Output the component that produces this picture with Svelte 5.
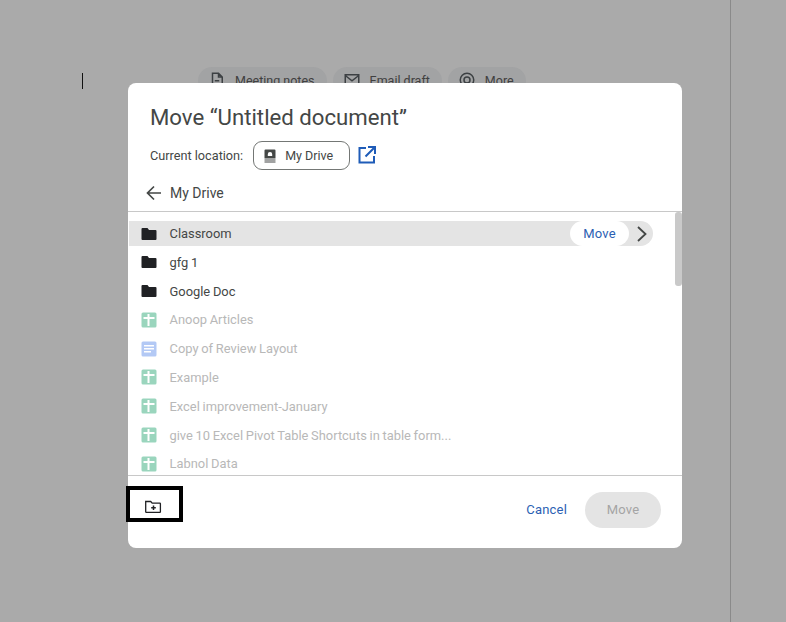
<script>
  const folders = ['Classroom', 'gfg 1', 'Google Doc'];
  const files = [
    { name: 'Anoop Articles', type: 'sheet' },
    { name: 'Copy of Review Layout', type: 'doc' },
    { name: 'Example', type: 'sheet' },
    { name: 'Excel improvement-January', type: 'sheet' },
    { name: 'give 10 Excel Pivot Table Shortcuts in table form...', type: 'sheet' },
    { name: 'Labnol Data', type: 'sheet' }
  ];
</script>

<div class="page">
  <div class="doc">
    <span class="caret"></span>
    <div class="chips">
      <div class="chip">
        <svg width="18" height="18" viewBox="0 0 24 24" fill="none" stroke="#3c4043" stroke-width="2"><path d="M6 3h8l5 5v13H6zM14 3v5h5M9 13h6M9 17h6"/></svg>
        <span>Meeting notes</span>
      </div>
      <div class="chip">
        <svg width="18" height="18" viewBox="0 0 24 24" fill="none" stroke="#3c4043" stroke-width="2"><path d="M3 5h18v14H3zM3 6l9 7 9-7"/></svg>
        <span>Email draft</span>
      </div>
      <div class="chip">
        <svg width="18" height="18" viewBox="0 0 24 24" fill="none" stroke="#3c4043" stroke-width="2"><circle cx="12" cy="12" r="9"/><circle cx="12" cy="12" r="4"/></svg>
        <span>More</span>
      </div>
    </div>
  </div>
  <div class="margin"></div>

  <div class="dialog">
    <h1>Move “Untitled document”</h1>
    <div class="location">
      <span class="loc-label">Current location:</span>
      <div class="loc-chip">
        <svg width="14" height="14" viewBox="0 0 14 14"><path fill="#444746" d="M2.5 0.5h9a1 1 0 0 1 1 1V9.5h-11V1.500a1 1 0 0 1 1-1zM1.500 10.500h11v1h-11zM1.500 12.500h11v1h-11z"/><path fill="#fff" d="M7 3a2.200 2.200 0 0 1 2.200 2.200V7H4.800V5.200A2.200 2.200 0 0 1 7 3z"/></svg>
        <span>My Drive</span>
      </div>
      <svg class="open" width="20" height="20" viewBox="0 0 20 20" fill="none" stroke="#1f5cb8" stroke-width="2"><path d="M9 3H2.500v14.500H17V11M11 2h7v7M18 2 8.500 11.500"/></svg>
    </div>
    <div class="crumb">
      <svg width="18" height="18" viewBox="0 0 18 18" fill="none" stroke="#444746" stroke-width="1.700"><path d="M16 9H2.500M9 2.500 2.500 9 9 15.500"/></svg>
      <span>My Drive</span>
    </div>

    <div class="list">
      {#each folders as name, i}
        <div class="row" class:selected={i === 0}>
          <svg class="icon" width="16" height="16" viewBox="0 0 16 16"><path fill="#202124" d="M1.500 2h5l1.500 2h6.500a1 1 0 0 1 1 1v8a1 1 0 0 1-1 1H1.500a1 1 0 0 1-1-1V3a1 1 0 0 1 1-1z"/></svg>
          <span class="name">{name}</span>
          {#if i === 0}
            <span class="row-move">Move</span>
            <svg class="chev" width="12" height="18" viewBox="0 0 12 18" fill="none" stroke="#444746" stroke-width="1.800"><path d="M2 2l7.500 7L2 16"/></svg>
          {/if}
        </div>
      {/each}
      {#each files as file}
        <div class="row disabled">
          {#if file.type === 'sheet'}
            <svg class="icon" width="16" height="16" viewBox="0 0 16 16"><rect width="15" height="15" x=".5" y=".5" rx="1.500" fill="#9ad5bd"/><path fill="#fff" d="M6.500 2h2v3h5v2h-5v7h-2V7h-4V5h4z"/></svg>
          {:else}
            <svg class="icon" width="16" height="16" viewBox="0 0 16 16"><rect width="15" height="15" x=".5" y=".5" rx="1.500" fill="#b3c9f5"/><path fill="#fff" d="M3 4h10v1.500H3zM3 7h10v1.500H3zM3 10h7v1.500H3z"/></svg>
          {/if}
          <span class="name">{file.name}</span>
        </div>
      {/each}
      <div class="scrollbar"></div>
    </div>

    <div class="footer">
      <svg class="new-folder" width="18" height="18" viewBox="0 0 18 18" fill="none" stroke="#202124" stroke-width="1.300"><path d="M1.700 3.500h5l1.500 1.700h7.600a.6.6 0 0 1 .6.600v8a.6.6 0 0 1-.6.6H2.300a.6.600 0 0 1-.6-.6z"/><path stroke-width="1.500" d="M9.500 7.500v4.500M7.200 9.700h4.600"/></svg>
      <div class="actions">
        <span class="cancel">Cancel</span>
        <span class="move">Move</span>
      </div>
    </div>
    <div class="annotation"></div>
  </div>
</div>

<style>
  :global(body) {
    margin: 0;
  }
  .page {
    position: relative;
    width: 786px;
    height: 622px;
    background: #aaaaaa;
    display: flex;
    overflow: hidden;
    font-family: Roboto, "Liberation Sans", sans-serif;
    color: #444746;
  }
  .doc {
    width: 731px;
    flex: none;
    padding: 67px 0 0 82px;
    box-sizing: border-box;
    display: flex;
    align-items: flex-start;
    border-right: 1px solid #8a8a8a;
  }
  .caret {
    width: 1px;
    height: 16px;
    margin-top: 6px;
    background: #111;
    flex: none;
  }
  .chips {
    display: flex;
    gap: 6px;
    margin-left: 115px;
  }
  .chip {
    height: 26px;
    padding: 0 12px 2px 10px;
    border-radius: 14px;
    background: #a2a3a4;
    display: flex;
    align-items: center;
    gap: 9px;
    font-size: 12.500px;
    color: #404040;
  }
  .margin {
    flex: 1;
  }
  .dialog {
    position: absolute;
    left: 128px;
    top: 83px;
    width: 554px;
    height: 465px;
    background: #fff;
    border-radius: 8px;
    display: flex;
    flex-direction: column;
  }
  h1 {
    margin: 20px 0 0 22px;
    font-size: 22.200px;
    font-weight: 400;
    line-height: 28px;
    color: #444746;
  }
  .location {
    display: flex;
    align-items: center;
    margin: 10px 0 0 22px;
    height: 29px;
  }
  .loc-label {
    font-size: 12.700px;
    color: #444746;
    margin-right: 10px;
  }
  .loc-chip {
    width: 97px;
    height: 29px;
    box-sizing: border-box;
    border: 1px solid #747775;
    border-radius: 9px;
    display: flex;
    align-items: center;
    gap: 8px;
    padding-left: 9px;
    font-size: 12.500px;
  }
  .open {
    margin: -2px 0 0 7px;
  }
  .crumb {
    display: flex;
    align-items: center;
    gap: 7px;
    margin: 13px 0 0 17px;
    height: 20px;
    font-size: 14px;
  }
  .list {
    position: relative;
    margin-top: 8px;
    border-top: 1px solid #c8c8c8;
    border-bottom: 1px solid #c8c8c8;
    padding-top: 9px;
    height: 254px;
    overflow: hidden;
  }
  .row {
    height: 25px;
    margin: 0 29px 3.800px 1px;
    display: flex;
    align-items: center;
    padding-left: 12px;
    border-radius: 0 13px 13px 0;
    font-size: 12.900px;
    color: #444746;
  }
  .selected {
    background: #e4e4e4;
  }
  .icon {
    flex: none;
    margin-right: 12.500px;
  }
  .disabled {
    color: #b8b8b8;
  }
  .name {
    flex: 1;
    word-spacing: -0.5px;
  }
  .row-move {
    width: 59px;
    height: 25px;
    line-height: 25px;
    text-align: center;
    border-radius: 13px;
    background: #fff;
    color: #2c5fb3;
    font-size: 13px;
    letter-spacing: 0.2px;
  }
  .chev {
    margin: 0 5px 0 7px;
  }
  .scrollbar {
    position: absolute;
    top: 0;
    left: 547px;
    width: 7px;
    height: 74px;
    background: #c9c9c9;
    border-radius: 3px;
  }
  .footer {
    flex: 1;
    display: flex;
    justify-content: space-between;
    align-items: flex-start;
    padding: 16px 21px 0 16px;
  }
  .new-folder {
    margin-top: 6px;
  }
  .actions {
    display: flex;
    align-items: center;
    gap: 18px;
  }
  .cancel {
    color: #2c5fb3;
    font-size: 13px;
    letter-spacing: 0.2px;
    margin-top: -2px;
  }
  .move {
    width: 76px;
    height: 36px;
    line-height: 36px;
    text-align: center;
    border-radius: 18px;
    background: #e4e4e4;
    color: #a4a4a4;
    font-size: 13px;
    letter-spacing: 0.2px;
  }
  .annotation {
    position: absolute;
    left: -2px;
    top: 403px;
    width: 57px;
    height: 36px;
    box-sizing: border-box;
    border: 4px solid #000;
  }
</style>
